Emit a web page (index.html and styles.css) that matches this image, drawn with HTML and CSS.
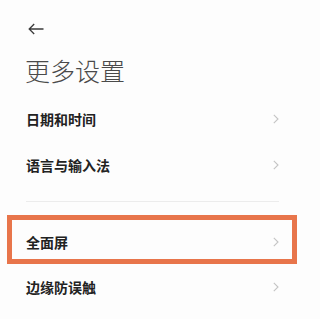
FILE: index.html
```html
<!DOCTYPE html>
<html lang="zh-CN">
<head>
<meta charset="utf-8">
<link rel="stylesheet" href="styles.css">
</head>
<body>
<div class="page">
  <header class="header">
    <svg class="back" width="16" height="12" viewBox="0 0 16 12"><path d="M15.5 6H1.2M6.2 1L1.2 6l5 5" fill="none" stroke="#3a3a3a" stroke-width="1.3"/></svg>
    <h1 class="title">更多设置</h1>
  </header>
  <div class="list">
    <div class="row"><span class="label">日期和时间</span><svg class="chev" width="6" height="10" viewBox="0 0 6 10"><path d="M0.8 0.8L5 5L0.8 9.2" fill="none" stroke="#c4c4c4" stroke-width="1.1"/></svg></div>
    <div class="row"><span class="label">语言与输入法</span><svg class="chev" width="6" height="10" viewBox="0 0 6 10"><path d="M0.8 0.8L5 5L0.8 9.2" fill="none" stroke="#c4c4c4" stroke-width="1.1"/></svg></div>
    <div class="divider"></div>
    <div class="row row-hl"><span class="label">全面屏</span><svg class="chev" width="6" height="10" viewBox="0 0 6 10"><path d="M0.8 0.8L5 5L0.8 9.2" fill="none" stroke="#c4c4c4" stroke-width="1.1"/></svg></div>
    <div class="row"><span class="label">边缘防误触</span><svg class="chev" width="6" height="10" viewBox="0 0 6 10"><path d="M0.8 0.8L5 5L0.8 9.2" fill="none" stroke="#c4c4c4" stroke-width="1.1"/></svg></div>
  </div>
</div>
</body>
</html>
```
FILE: styles.css
```css
html, body {
  margin: 0;
  padding: 0;
  background: #fdfdfd;
}
.page {
  width: 301px;
  height: 319px;
  overflow: hidden;
  font-family: "Noto Sans CJK SC", "Noto Sans", sans-serif;
}
.header {
  padding: 23px 0 0 28px;
  display: flex;
  flex-direction: column;
}
.back {
  display: block;
}
.title {
  margin: 19px 0 0 -3px;
  font-size: 25px;
  line-height: 32px;
  font-weight: 300;
  color: #4a4a4a;
  letter-spacing: 0;
}
.list {
  margin-top: 10px;
  padding: 0 22px 0 26px;
  display: flex;
  flex-direction: column;
}
.row {
  height: 46px;
  display: flex;
  align-items: center;
  justify-content: space-between;
}
.label {
  font-size: 14px;
  font-weight: 700;
  color: #222;
  line-height: 20px;
}
.chev {
  display: block;
}
.divider {
  height: 1px;
  background: #ececec;
  margin: 13px 0 13px;
}
.row.row-hl {
  margin: 0 -18px 0 -19px;
  padding: 4px 13px 0 14px;
  border: 5px solid #e8754b;
  box-sizing: content-box;
  height: 35px;
}
```
